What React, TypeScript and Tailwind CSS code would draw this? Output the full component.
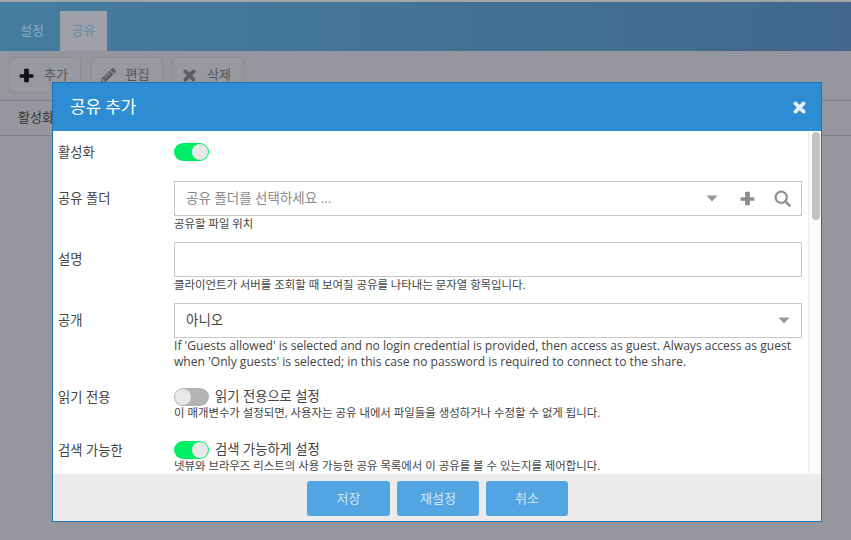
import React from "react";
import { FaPencilAlt } from "react-icons/fa";

const font = { fontFamily: '"Open Sans","Noto Sans CJK KR",sans-serif' };

function Plus({ size, className }: { size: number; className?: string }) {
  return (
    <svg width={size} height={size} viewBox="0 0 14 14" className={className} fill="currentColor">
      <path d="M5.2 0.6h3.6a.4.4 0 0 1 .4.4v4.8H13a.4.4 0 0 1 .4.4v2.6a.4.4 0 0 1-.4.4H9.2V13a.4.4 0 0 1-.4.4H5.2a.4.4 0 0 1-.4-.4V9.2H1a.4.4 0 0 1-.4-.4V6.2a.4.4 0 0 1 .4-.4h3.8V1a.4.4 0 0 1 .4-.4z" />
    </svg>
  );
}

function Cross({ size, className }: { size: number; className?: string }) {
  return (
    <svg width={size} height={size} viewBox="0 0 14 14" className={className} stroke="currentColor" strokeWidth="4" strokeLinecap="round" fill="none">
      <path d="M2.6 2.6 11.4 11.4M11.4 2.6 2.6 11.4" />
    </svg>
  );
}

function Caret({ className }: { className?: string }) {
  return (
    <svg width="12" height="7" viewBox="0 0 12 7" className={className} fill="currentColor">
      <path d="M0.5 0.5h11L6 6.5z" />
    </svg>
  );
}

function Search({ className }: { className?: string }) {
  return (
    <svg width="17" height="17" viewBox="0 0 17 17" className={className} fill="none" stroke="currentColor">
      <circle cx="7.2" cy="7.2" r="5.6" strokeWidth="2.2" />
      <path d="M11.4 11.4 15.6 15.6" strokeWidth="2.6" strokeLinecap="round" />
    </svg>
  );
}

function Toggle({ on }: { on: boolean }) {
  return (
    <div className={`flex h-[18px] w-[35px] shrink-0 items-center rounded-full p-[1px] ${on ? "justify-end bg-[#00ee66]" : "justify-start bg-[#b3b3b3]"}`}>
      <div className="h-4 w-4 rounded-full bg-[#e8e8e8]" />
    </div>
  );
}

function ToolBtn({ icon, label }: { icon: React.ReactNode; label: string }) {
  return (
    <div className="flex h-9 w-[72px] items-center gap-[10px] rounded-[3px] border border-[#8c8c94] bg-[#98989f] pl-[9px] text-[13px] text-[#55555b]">
      <span className="flex w-[15px] items-center justify-center">{icon}</span>
      <span>{label}</span>
    </div>
  );
}

function Row({ label, children, className, inset = true }: { label: string; children: React.ReactNode; className?: string; inset?: boolean }) {
  return (
    <div className={`flex ${className ?? ""}`}>
      <div className={`w-[121px] shrink-0 pl-[5px] text-[13.3px] leading-[18px] text-[#444] ${inset ? "pt-[7.5px]" : ""}`}>{label}</div>
      <div className="min-w-0 flex-1">{children}</div>
    </div>
  );
}

function Hint({ children, tight, latin }: { children: React.ReactNode; tight?: boolean; latin?: boolean }) {
  return <div className={`leading-[16px] text-[#444] ${latin ? "text-[12.1px]" : "text-[11.4px]"} ${tight ? "-mt-px" : ""}`}>{children}</div>;
}

export default function App() {
  return (
    <div style={font} className="relative h-[540px] w-[851px] overflow-hidden bg-[#96969e]">
      <div className="h-[2px] bg-[#a5a5a5]" />
      <div className="flex h-[49px] items-end bg-gradient-to-r from-[#457d9f] to-[#41688c] pl-[9px]">
        <div className="flex h-10 w-[46px] items-center justify-center text-[13px] text-[#8fabc0]">설정</div>
        <div className="ml-[5px] flex h-10 w-[47px] items-center justify-center bg-[#a0a1a8] text-[13px] text-[#5f8cac]">공유</div>
      </div>
      <div className="flex h-[50px] gap-[9.5px] border-b border-[#7f7f86] pl-[9px] pt-[6px]">
        <ToolBtn icon={<Plus size={15} className="text-[#111]" />} label="추가" />
        <ToolBtn icon={<FaPencilAlt size={15} className="text-[#5c5c62]" />} label="편집" />
        <ToolBtn icon={<Cross size={13} className="text-[#5c5c62]" />} label="삭제" />
      </div>
      <div className="h-[35px] border-b border-[#7f7f86] pl-[18px] pt-[6px] text-[13px] leading-[20px] text-[#333]">활성화</div>

      <div className="absolute left-[52px] top-[82px] flex h-[440px] w-[770px] flex-col border border-[#1f72b8] bg-white">
        <div className="flex h-[48px] shrink-0 items-center justify-between bg-[#2e8cd3] pl-[17px] pr-[15px] text-white">
          <span className="text-[16.8px]">공유 추가</span>
          <Cross size={13} className="text-[#e4f0fa]" />
        </div>
        <div className="flex min-h-0 flex-1">
          <div className="flex min-w-0 flex-1 flex-col overflow-hidden pr-[6px] pt-[12px]">
            <Row label="활성화" inset={false} className="h-[38px]">
              <Toggle on />
            </Row>
            <Row label="공유 폴더" className="h-[61px]">
              <div className="flex h-[35px] items-center border border-[#c8c8c8] pl-[11px] pr-[10px] text-[13.5px] text-[#8a8a8a]">
                <span className="flex-1">공유 폴더를 선택하세요 ...</span>
                <Caret className="mr-[22px] text-[#999]" />
                <Plus size={15} className="mr-[19px] text-[#8c8c8c]" />
                <Search className="text-[#929292]" />
              </div>
              <Hint>공유할 파일 위치</Hint>
            </Row>
            <Row label="설명" className="h-[61px]">
              <div className="h-[35px] border border-[#c8c8c8]" />
              <Hint>클라이언트가 서버를 조회할 때 보여질 공유를 나타내는 문자열 항목입니다.</Hint>
            </Row>
            <Row label="공개" className="h-[85px]">
              <div className="flex h-[35px] items-center justify-between border border-[#c8c8c8] pl-[11px] pr-[11px] text-[13.5px] text-[#444]">
                <span>아니오</span>
                <Caret className="text-[#999]" />
              </div>
              <Hint latin>
                If 'Guests allowed' is selected and no login credential is provided, then access as guest. Always access as guest when 'Only guests' is selected; in this case no password is required to connect to the share.
              </Hint>
            </Row>
            <Row label="읽기 전용" inset={false} className="h-[53px]">
              <div className="flex h-[18px] items-center gap-[6px] text-[13.3px] text-[#444]">
                <Toggle on={false} />
                <span>읽기 전용으로 설정</span>
              </div>
              <Hint tight>이 매개변수가 설정되면, 사용자는 공유 내에서 파일들을 생성하거나 수정할 수 없게 됩니다.</Hint>
            </Row>
            <Row label="검색 가능한" inset={false}>
              <div className="flex h-[18px] items-center gap-[6px] text-[13.3px] text-[#444]">
                <Toggle on />
                <span>검색 가능하게 설정</span>
              </div>
              <Hint tight>넷뷰와 브라우즈 리스트의 사용 가능한 공유 목록에서 이 공유를 볼 수 있는지를 제어합니다.</Hint>
            </Row>
          </div>
          <div className="w-[13px] shrink-0 border-l border-[#ececec] bg-[#fafafa] pl-[3px] pr-[1px] pt-[1px]">
            <div className="h-[88px] rounded-[4px] bg-[#c1c1c1]" />
          </div>
        </div>
        <div className="flex h-[47px] shrink-0 items-start gap-[7px] bg-[#ebebeb] pl-[254px] pt-[7px]">
          {["저장", "재설정", "취소"].map((t, i) => (
            <div key={t} className={`flex h-[35px] items-center justify-center rounded-[3px] bg-[#52a5e0] text-[13px] text-[#d5e8f6] ${i === 0 ? "w-[83px]" : "w-[82px]"}`}>
              {t}
            </div>
          ))}
        </div>
      </div>
    </div>
  );
}
